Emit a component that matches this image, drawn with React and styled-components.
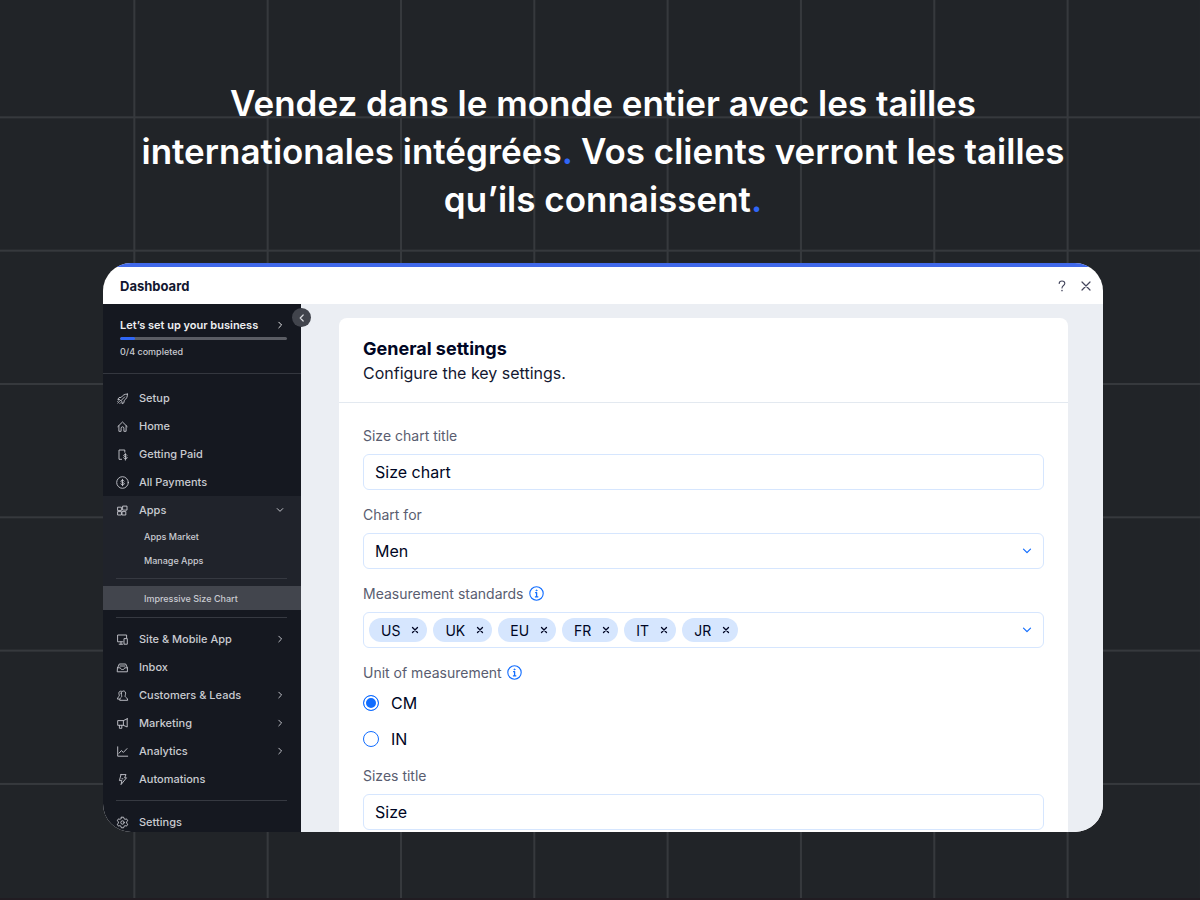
import { useState } from "react";
import styled, { createGlobalStyle } from "styled-components";

const GlobalStyle = createGlobalStyle`
  * {
    box-sizing: border-box;
  }
  body {
    margin: 0;
    background-color: #212428;
    font-family: Inter, "Open Sans", sans-serif;
  }
  button, input, select {
    font-family: inherit;
  }
`;

// the middle layer hides the first vertical line at the left edge
const Page = styled.div`
  display: flex;
  flex-direction: column;
  height: 100vh;
  padding: 79px 97px 66px 103px;
  border-bottom: 2px solid #211c22;
  background-color: #212428;
  background-image:
    linear-gradient(to bottom, #36393d 2px, transparent 2px),
    linear-gradient(#212428, #212428),
    linear-gradient(to right, #36393d 2px, transparent 2px);
  background-size: 100% calc(100vw / 9), 4px 100%, calc(100% / 9) 100%;
  background-position: 0 -17px, 0 0, 0 0;
  background-repeat: repeat, no-repeat, repeat;
`;

const Headline = styled.h1`
  margin: 0;
  color: #fff;
  font-size: 35px;
  font-weight: 600;
  line-height: 48px;
  text-align: center;
`;
const Dot = styled.span`
  color: #2f66f6;
`;

const Window = styled.div`
  display: flex;
  flex-direction: column;
  flex: 1;
  min-height: 0;
  margin-top: 40px;
  overflow: hidden;
  border-radius: 28px;
  background-color: #fff;
`;
const WindowBar = styled.header`
  display: flex;
  align-items: center;
  justify-content: space-between;
  flex-shrink: 0;
  height: 41px;
  padding: 0 10px 0 17px;
  border-top: 4px solid #4169ea;
`;
const WindowTitle = styled.h2`
  margin: 0;
  color: #131730;
  font-size: 13px;
  font-weight: 700;
`;
const WindowActions = styled.div`
  display: flex;
  gap: 10px;
`;
const IconButton = styled.button`
  display: flex;
  align-items: center;
  justify-content: center;
  width: 14px;
  height: 14px;
  padding: 0;
  border: none;
  background: none;
  color: ${(props) => props.$color || "#43455c"};
  cursor: pointer;
`;
const WindowBody = styled.div`
  display: flex;
  flex: 1;
  min-height: 0;
`;

const Sidebar = styled.aside`
  position: relative;
  width: 198px;
  flex-shrink: 0;
  background-color: #151820;
  color: #c9cbd1;
`;
const CollapseButton = styled.button`
  position: absolute;
  top: 4px;
  right: -10px;
  z-index: 1;
  display: flex;
  align-items: center;
  justify-content: center;
  width: 19px;
  height: 19px;
  padding: 0;
  border: none;
  border-radius: 50%;
  background-color: #41444c;
  color: #d5d6da;
  cursor: pointer;
`;
const SetupBox = styled.div`
  height: 70px;
  padding: 13px 14px 0 17px;
  border-bottom: 1px solid #34373f;
`;
const SetupLink = styled.a`
  display: flex;
  align-items: center;
  justify-content: space-between;
  height: 16px;
  padding-right: 3px;
  color: #eeeff1;
  font-size: 11px;
  font-weight: 600;
  text-decoration: none;
  white-space: nowrap;
`;
const ProgressTrack = styled.div`
  height: 3px;
  margin: 4px 0 5px;
  overflow: hidden;
  border-radius: 2px;
  background-color: #5b5d64;
`;
const ProgressBar = styled.div`
  height: 100%;
  border-radius: 2px;
  background-color: #2f66f6;
`;
const ProgressText = styled.div`
  font-size: 9px;
  font-weight: 500;
  line-height: 14px;
`;

const Nav = styled.nav`
  padding-top: 10px;
`;
const NavGroup = styled.div`
  background-color: #20232b;
`;
const NavItem = styled.a`
  display: flex;
  align-items: center;
  height: 28px;
  padding: 0 17px 0 13px;
  color: inherit;
  font-size: 11px;
  font-weight: 500;
  text-decoration: none;
`;
const NavLabel = styled.span`
  flex: 1;
  margin-left: 10px;
  white-space: nowrap;
`;
const SubItem = styled.a`
  display: flex;
  align-items: center;
  height: 24px;
  padding-left: 41px;
  background-color: ${(props) => (props.$active ? "#42454d" : "transparent")};
  color: inherit;
  font-size: 9px;
  font-weight: 500;
  text-decoration: none;
`;
const NavDivider = styled.hr`
  height: 1px;
  margin: 0 14px 0 13px;
  border: none;
  background-color: #363941;
`;
const Spacer = styled.div`
  padding: ${(props) => (props.$tight ? "6px 0 7px" : "7px 0")};
`;

const Main = styled.main`
  flex: 1;
  min-width: 0;
  padding: 14px 35px 0 38px;
  overflow: hidden;
  background-color: #ebeef3;
`;
const Panel = styled.section`
  border-radius: 8px;
  background-color: #fff;
`;
const PanelHeader = styled.div`
  height: 85px;
  padding: 19px 24px 0;
  border-bottom: 1px solid #e3e9f0;
`;
const PanelTitle = styled.h3`
  margin: 0;
  color: #000624;
  font-size: 18px;
  font-weight: 700;
  line-height: 24px;
`;
const PanelSubtitle = styled.p`
  margin: 0;
  color: #131730;
  font-size: 16px;
  line-height: 24px;
`;
const PanelBody = styled.form`
  display: flex;
  flex-direction: column;
  gap: 14px;
  padding: 22px 24px 24px;
`;

const Field = styled.div`
  display: flex;
  flex-direction: column;
  gap: 9px;
`;
const LabelRow = styled.div`
  display: flex;
  align-items: center;
  gap: 5px;
  height: 20px;
  color: #595d70;
  font-size: 14px;
`;
const Control = styled.div`
  position: relative;
  display: flex;
  align-items: center;
  height: 36px;
  border: 1px solid #d6e6fe;
  border-radius: 6px;
  background-color: #fff;
`;
const TextInput = styled.input`
  width: 100%;
  height: 100%;
  padding: 0 11px;
  border: none;
  border-radius: 6px;
  outline: none;
  background: none;
  color: #000624;
  font-size: 16px;
`;
const Select = styled.select`
  width: 100%;
  height: 100%;
  padding: 0 11px;
  border: none;
  outline: none;
  appearance: none;
  background: none;
  color: #000624;
  font-size: 16px;
`;
const SelectArrow = styled.span`
  position: absolute;
  right: 11px;
  display: flex;
  color: #116dff;
  pointer-events: none;
`;
const Tags = styled.div`
  display: flex;
  flex: 1;
  gap: 6px;
  padding-left: 5px;
`;
const Tag = styled.span`
  display: flex;
  align-items: center;
  height: 24px;
  padding: 0 5px 0 12px;
  border-radius: 12px;
  background-color: #d6e6fe;
  color: #000624;
  font-size: 14px;
`;
const TagRemove = styled(IconButton)`
  margin-left: 8px;
`;

const RadioGroup = styled.div`
  display: flex;
  flex-direction: column;
  gap: 12px;
`;
const RadioLabel = styled.label`
  display: flex;
  align-items: center;
  gap: 12px;
  height: 24px;
  color: #000624;
  font-size: 16px;
`;
const Radio = styled.input`
  width: 16px;
  height: 16px;
  margin: 0;
  appearance: none;
  border: 1px solid #116dff;
  border-radius: 50%;
  background-color: #fff;

  &:checked {
    background-color: #116dff;
    box-shadow: inset 0 0 0 2px #fff;
  }
`;

const Glyph = styled.svg`
  display: block;
  flex-shrink: 0;
  fill: none;
  stroke: currentColor;
  stroke-linecap: round;
  stroke-linejoin: round;
`;
const InfoGlyph = styled(Glyph)`
  color: #116dff;
`;

const chevrons = {
  right: "M3.5 1.5 7 5 3.5 8.5",
  left: "M6.2 2 3.2 5 6.2 8",
  down: "M1.5 3.2 5 6.7 8.5 3.2",
};

const Chevron = ({ to, size = 8 }) => (
  <Glyph width={size} height={size} viewBox="0 0 10 10" strokeWidth="1.2" aria-hidden="true">
    <path d={chevrons[to]} />
  </Glyph>
);

const InfoIcon = () => (
  <InfoGlyph width="15" height="15" viewBox="0 0 15 15" aria-hidden="true">
    <circle cx="7.5" cy="7.5" r="6.7" strokeWidth="1.1" />
    <path d="M6.1 6.6h1.5v4M5.900 10.800h3.400" strokeWidth="1.3" strokeLinecap="butt" />
    <circle cx="7.4" cy="4.4" r="0.5" strokeWidth="0.9" />
  </InfoGlyph>
);

const navIcons = {
  setup: (
    <>
      <path d="M11.4 2.1c-2.7-.1-4.6 1-6.2 3.3L3 5.6 1.8 7.4l2 .2 2.2 2.2.2 2 1.8-1.2.2-2.2c2.3-1.6 3.4-3.5 3.2-6.3Z" />
      <path d="M8.7 4.9 5 8.6M3.6 9.2 1.8 11M2.2 8.7l-.6.6M4.8 10.6l-.9.9" />
    </>
  ),
  home: <path d="M1.8 6.6 6.5 2l4.7 4.6M2.9 5.8v5.5h2.2V8.2c0-1.9 2.8-1.9 2.8 0v3.1h2.2V5.8" />,
  paid: (
    <>
      <path d="M5.6 11.3H3V2h5.8v2.2" />
      <path d="M11 7.2c-.4-1.100-3.300-1.100-3.300.4 0 1.400 3.500.7 3.500 2.100 0 1.500-3.200 1.500-3.600.2M9.400 5.600v6.500" />
    </>
  ),
  payments: (
    <>
      <circle cx="6.5" cy="6.5" r="5.8" />
      <path d="M8.2 5c-.4-1.1-3.3-1.1-3.3.3 0 1.6 3.4.8 3.4 2.4 0 1.4-3 1.4-3.5.2M6.5 3.3v6.4" />
    </>
  ),
  apps: (
    <>
      <path d="M2 3.2h3.4v3.4H2zM2 7.6h3.4V11H2zM6.4 7.6h3.4V11H6.4z" />
      <path d="M7 2.1h4v4H7z" />
    </>
  ),
  site: (
    <>
      <path d="M7 8.8H1.6V2h9v2.6M3.2 11.2h3.6M5 8.8v2.4" />
      <path d="M8.4 5.6h2.9v5.6H8.4z" />
    </>
  ),
  inbox: (
    <>
      <path d="M1.6 6.8 3.3 3h6.4l1.7 3.8v4H1.6z" />
      <path d="M1.6 6.8h2.7c.2 2.3 4.2 2.3 4.4 0h2.7M4 5h5" />
    </>
  ),
  customers: (
    <>
      <path d="M5.2 4.200c0-3 4.400-3 4.400 0 0 1.800-.7 2.400-.4 3.400.4 1 2.500 1.200 2.500 3.700H3.700c0-2.500 1.700-2.700 2-3.700.2-1-.5-1.600-.5-3.400Z" />
      <path d="M5.400 2.200C3.600 1.800 2.700 3 2.900 4.700c.1 1.100.6 1.500.4 2.200-.3 1-1.800 1.200-1.800 3.200h2" />
    </>
  ),
  marketing: (
    <>
      <path d="M11.200 1.800v8.200L7.400 8.300H1.700V3.600h5.700L11.200 1.800ZM7.400 3.600v4.700" />
      <path d="M3.400 8.300v3h2.400v-3" />
    </>
  ),
  analytics: (
    <>
      <path d="M1.7 1.8v9.4h10" />
      <path d="m3 8.2 2.4-2.6 2 1.8L11 3.6" />
    </>
  ),
  automations: <path d="M5 1.6h5L8.6 4.8h1.9L5 11.6l.9-4H3.4L5 1.6ZM6.9 5.8h-1" />,
  settings: (
    <>
      <path d="M5.4 1.2h2.2l.4 1.5 1.1.6 1.5-.4 1.1 1.9-1.1 1.1v1.2l1.1 1.1-1.1 1.9-1.5-.4-1.1.6-.4 1.5H5.4L5 10.3l-1.1-.6-1.5.4-1.1-1.9 1.1-1.1V5.9L1.3 4.8l1.1-1.9 1.5.4L5 2.7Z" />
      <circle cx="6.5" cy="6.5" r="1.7" />
    </>
  ),
};

const topItems = [
  { id: "setup", label: "Setup" },
  { id: "home", label: "Home" },
  { id: "paid", label: "Getting Paid" },
  { id: "payments", label: "All Payments" },
];

const siteItems = [
  { id: "site", label: "Site & Mobile App", arrow: "right" },
  { id: "inbox", label: "Inbox" },
  { id: "customers", label: "Customers & Leads", arrow: "right" },
  { id: "marketing", label: "Marketing", arrow: "right" },
  { id: "analytics", label: "Analytics", arrow: "right" },
  { id: "automations", label: "Automations" },
];

const NavLink = ({ id, label, arrow }) => (
  <NavItem href={`#${id}`}>
    <Glyph width="13" height="13" viewBox="0 0 13 13" strokeWidth="0.9" aria-hidden="true">
      {navIcons[id]}
    </Glyph>
    <NavLabel>{label}</NavLabel>
    {arrow && <Chevron to={arrow} />}
  </NavItem>
);

const SideMenu = () => {
  const completed = 0.09;

  return (
    <Sidebar>
      <CollapseButton type="button" aria-label="Collapse menu">
        <Chevron to="left" size={10} />
      </CollapseButton>
      <SetupBox>
        <SetupLink href="#business">
          Let’s set up your business
          <Chevron to="right" />
        </SetupLink>
        <ProgressTrack>
          <ProgressBar style={{ width: `${completed * 100}%` }} />
        </ProgressTrack>
        <ProgressText>0/4 completed</ProgressText>
      </SetupBox>
      <Nav>
        {topItems.map((item) => (
          <NavLink key={item.id} {...item} />
        ))}
        <NavGroup>
          <NavLink id="apps" label="Apps" arrow="down" />
          <SubItem href="#market">Apps Market</SubItem>
          <SubItem href="#manage">Manage Apps</SubItem>
          <Spacer $tight>
            <NavDivider />
          </Spacer>
          <SubItem href="#size-chart" $active>Impressive Size Chart</SubItem>
        </NavGroup>
        <Spacer>
          <NavDivider />
        </Spacer>
        {siteItems.map((item) => (
          <NavLink key={item.id} {...item} />
        ))}
        <Spacer>
          <NavDivider />
        </Spacer>
        <NavLink id="settings" label="Settings" />
      </Nav>
    </Sidebar>
  );
};

const SettingsForm = () => {
  const [title, setTitle] = useState("Size chart");
  const [chartFor, setChartFor] = useState("Men");
  const [standards, setStandards] = useState(["US", "UK", "EU", "FR", "IT", "JR"]);
  const [unit, setUnit] = useState("CM");
  const [sizesTitle, setSizesTitle] = useState("Size");

  const removeStandard = (name) => {
    setStandards(standards.filter((item) => item !== name));
  };

  return (
    <PanelBody>
      <Field>
        <LabelRow>
          <label htmlFor="title">Size chart title</label>
        </LabelRow>
        <Control>
          <TextInput id="title" value={title} onChange={(e) => setTitle(e.target.value)} />
        </Control>
      </Field>
      <Field>
        <LabelRow>
          <label htmlFor="chart-for">Chart for</label>
        </LabelRow>
        <Control>
          <Select id="chart-for" value={chartFor} onChange={(e) => setChartFor(e.target.value)}>
            <option>Men</option>
          </Select>
          <SelectArrow>
            <Chevron to="down" size={10} />
          </SelectArrow>
        </Control>
      </Field>
      <Field role="group" aria-labelledby="standards">
        <LabelRow>
          <span id="standards">Measurement standards</span>
          <InfoIcon />
        </LabelRow>
        <Control>
          <Tags>
            {standards.map((name) => (
              <Tag key={name}>
                {name}
                <TagRemove
                  type="button"
                  $color="#000624"
                  aria-label={`Remove ${name}`}
                  onClick={() => removeStandard(name)}
                >
                  <Glyph width="8" height="8" viewBox="0 0 8 8" strokeWidth="1.3">
                    <path d="m1.5 1.5 5 5m0-5-5 5" />
                  </Glyph>
                </TagRemove>
              </Tag>
            ))}
          </Tags>
          <SelectArrow>
            <Chevron to="down" size={10} />
          </SelectArrow>
        </Control>
      </Field>
      <Field role="radiogroup" aria-labelledby="unit">
        <LabelRow>
          <span id="unit">Unit of measurement</span>
          <InfoIcon />
        </LabelRow>
        <RadioGroup>
          {["CM", "IN"].map((name) => (
            <RadioLabel key={name}>
              <Radio
                type="radio"
                name="unit"
                value={name}
                checked={unit === name}
                onChange={() => setUnit(name)}
              />
              {name}
            </RadioLabel>
          ))}
        </RadioGroup>
      </Field>
      <Field>
        <LabelRow>
          <label htmlFor="sizes-title">Sizes title</label>
        </LabelRow>
        <Control>
          <TextInput
            id="sizes-title"
            value={sizesTitle}
            onChange={(e) => setSizesTitle(e.target.value)}
          />
        </Control>
      </Field>
    </PanelBody>
  );
};

const App = () => {
  return (
    <>
      <GlobalStyle />
      <Page>
        <Headline>
          Vendez dans le monde entier avec les tailles
          <br />
          internationales intégrées<Dot>.</Dot> Vos clients verront les tailles
          <br />
          qu’ils connaissent<Dot>.</Dot>
        </Headline>
        <Window>
          <WindowBar>
            <WindowTitle>Dashboard</WindowTitle>
            <WindowActions>
              <IconButton type="button" aria-label="Help">
                <Glyph width="12" height="12" viewBox="0 0 12 12" strokeWidth="1.1">
                  <path d="M3.200 3.400c0-3.200 5.600-3.200 5.600 0C8.800 5.600 6 5.500 6 8" />
                  <circle cx="6" cy="10.5" r="0.3" />
                </Glyph>
              </IconButton>
              <IconButton type="button" aria-label="Close">
                <Glyph width="12" height="12" viewBox="0 0 12 12" strokeWidth="1.2">
                  <path d="m2 2 8 8m0-8-8 8" />
                </Glyph>
              </IconButton>
            </WindowActions>
          </WindowBar>
          <WindowBody>
            <SideMenu />
            <Main>
              <Panel>
                <PanelHeader>
                  <PanelTitle>General settings</PanelTitle>
                  <PanelSubtitle>Configure the key settings.</PanelSubtitle>
                </PanelHeader>
                <SettingsForm />
              </Panel>
            </Main>
          </WindowBody>
        </Window>
      </Page>
    </>
  );
};

export default App;
